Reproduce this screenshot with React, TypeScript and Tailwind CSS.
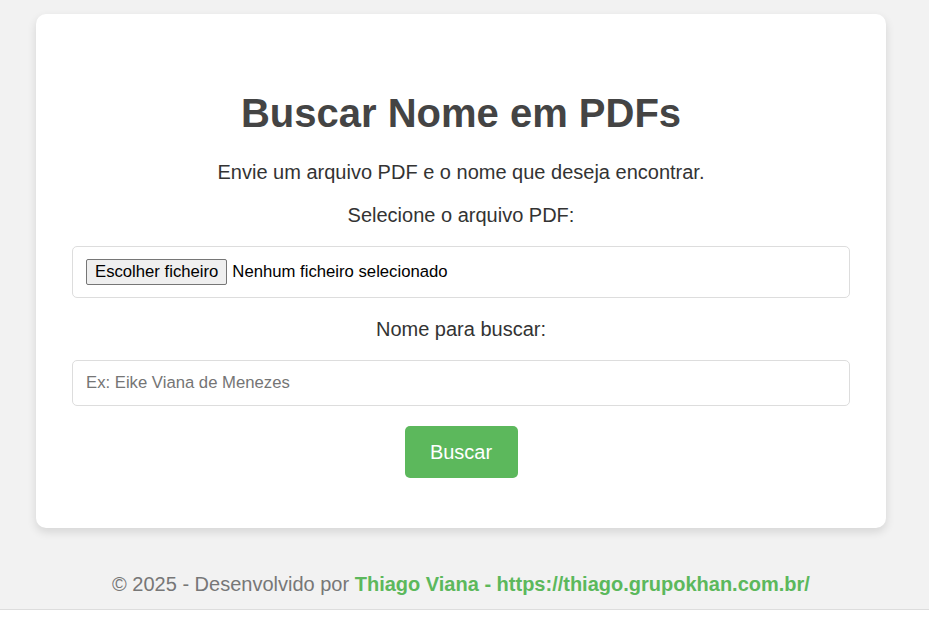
export default function App() {
  return (
    <div className="bg-white min-h-[620px]" style={{ fontFamily: '"Liberation Sans", Arial, sans-serif' }}>
      <div className="bg-[#f2f2f2] border-b border-[#dddddd] h-[610px]">
        <div className="w-[922px] flex flex-col items-center">
          <div className="mt-[14px] w-[850px] bg-white rounded-[10px] shadow-[0_4px_10px_rgba(0,0,0,0.12)] px-[36px] pt-[40px] pb-[50px] flex flex-col items-center text-[#333333]">
            <h1 className="mt-[36px] text-[40px] leading-[46px] font-bold text-[#444444]">Buscar Nome em PDFs</h1>
            <p className="mt-[24px] text-[20px] leading-[24px]">Envie um arquivo PDF e o nome que deseja encontrar.</p>
            <div className="mt-[19px] text-[20px] leading-[24px]">Selecione o arquivo PDF:</div>
            <div className="mt-[19px] w-full h-[52px] border border-[#dddddd] rounded-[5px] flex items-center pl-[13px]">
              <span className="h-[26px] px-[8px] flex items-center bg-[#efefef] border border-[#767676] rounded-[2px] text-[16.7px] text-black">Escolher ficheiro</span>
              <span className="ml-[5px] text-[16.7px] text-black">Nenhum ficheiro selecionado</span>
            </div>
            <div className="mt-[19px] text-[20px] leading-[24px]">Nome para buscar:</div>
            <input
              className="mt-[19px] w-full h-[46px] border border-[#dddddd] rounded-[5px] px-[13px] text-[16.7px] text-black placeholder:text-[#757575] outline-none"
              placeholder="Ex: Eike Viana de Menezes"
              style={{ fontFamily: '"Liberation Sans", Arial, sans-serif' }}
            />
            <button className="mt-[20px] h-[52px] w-[113px] bg-[#5cb85c] text-white text-[20px] rounded-[5px]" style={{ fontFamily: '"Liberation Sans", Arial, sans-serif' }}>
              Buscar
            </button>
          </div>
          <footer className="mt-[44px] text-[20px] leading-[24px] text-[#777777]">
            © 2025 - Desenvolvido por{" "}
            <span className="font-bold text-[#5cb85c]">Thiago Viana - https://thiago.grupokhan.com.br/</span>
          </footer>
        </div>
      </div>
    </div>
  );
}
